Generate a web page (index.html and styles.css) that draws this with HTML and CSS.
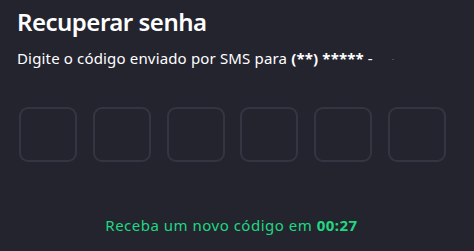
FILE: index.html
```html
<!DOCTYPE html>
<html lang="pt">
<head>
<meta charset="utf-8">
<link rel="stylesheet" href="styles.css">
</head>
<body>
<main class="panel">
  <h1 class="title">Recuperar senha</h1>
  <p class="subtitle">Digite o código enviado por SMS para <strong>(**) *****</strong> -<span class="dot"></span></p>
  <div class="code">
    <div class="cell"></div>
    <div class="cell"></div>
    <div class="cell"></div>
    <div class="cell"></div>
    <div class="cell"></div>
    <div class="cell"></div>
  </div>
  <p class="resend">Receba um novo código em <strong>00:27</strong></p>
</main>
</body>
</html>
```

FILE: styles.css
```css
html, body {
  margin: 0;
  padding: 0;
  background: #24242f;
}
body {
  width: 474px;
  height: 251px;
  overflow: hidden;
  font-family: "Noto Sans", "DejaVu Sans", sans-serif;
  color: #ffffff;
}
.panel {
  padding: 6px 28px 0 17px;
  display: flex;
  flex-direction: column;
}
.title {
  margin: 0;
  font-size: 24px;
  line-height: 32px;
  font-weight: 600;
  letter-spacing: -0.5px;
}
.subtitle {
  margin: 10px 0 0 0;
  font-size: 15px;
  line-height: 20px;
  font-weight: 400;
  letter-spacing: 0.16px;
  position: relative;
}
.subtitle strong {
  font-weight: 700;
}
.dot {
  position: absolute;
  left: 375px;
  top: 11px;
  width: 2px;
  height: 1px;
  background: #7a3a3a;
}
.code {
  margin: 39px 0 0 2px;
  display: flex;
  gap: 15.8px;
}
.cell {
  width: 58px;
  height: 55px;
  box-sizing: border-box;
  border: 2px solid #353442;
  border-radius: 9px;
}
.resend {
  margin: 53px 0 0 0;
  text-align: center;
  color: #1fd881;
  font-size: 15px;
  line-height: 20px;
  letter-spacing: 0.5px;
}
.resend strong {
  font-weight: 700;
}
```
